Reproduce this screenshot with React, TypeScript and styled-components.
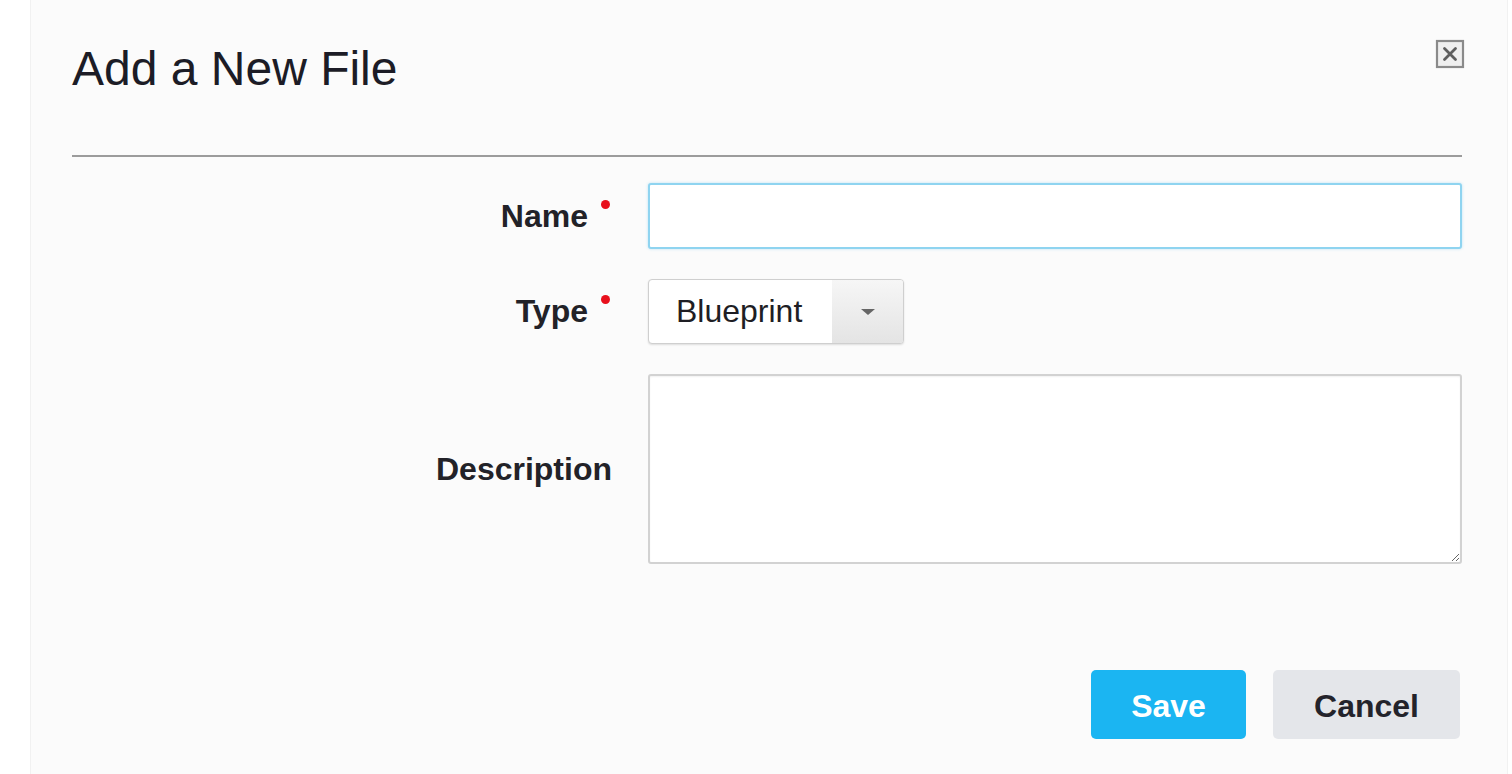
import React from 'react';
import styled, { createGlobalStyle } from 'styled-components';

const GlobalStyle = createGlobalStyle`
  html, body {
    margin: 0;
    padding: 0;
    height: 100%;
    background: #ffffff;
    font-family: "Liberation Sans", Arial, Helvetica, sans-serif;
    overflow: hidden;
  }
  #root {
    height: 100%;
  }
`;

const Page = styled.div`
  height: 774px;
  display: flex;
  padding-left: 30px;
`;

const Dialog = styled.div`
  width: 1478px;
  height: 100%;
  box-sizing: border-box;
  background: #fbfbfb;
  border-left: 1px solid #f1f1f1;
  border-right: 1px solid #f1f1f1;
  padding: 0 45px 0 41px;
  display: flex;
  flex-direction: column;
`;

const Header = styled.div`
  display: flex;
  justify-content: space-between;
  align-items: flex-start;
  padding-top: 41px;
  padding-bottom: 58px;
  border-bottom: 2px solid #9c9c9c;
`;

const Title = styled.h1`
  margin: 0;
  font-size: 48px;
  line-height: 56px;
  font-weight: normal;
  color: #1c1c26;
`;

const CloseButton = styled.button`
  margin: -2px -3px 0 0;
  padding: 0;
  border: none;
  background: none;
  width: 30px;
  height: 30px;
  cursor: pointer;
`;

const Form = styled.div`
  display: grid;
  grid-template-columns: 540px 814px;
  column-gap: 36px;
  row-gap: 30px;
  padding-top: 26px;
`;

const Label = styled.label`
  align-self: center;
  text-align: right;
  font-size: 32px;
  font-weight: bold;
  color: #222228;
  white-space: nowrap;
`;

const Required = styled.span`
  display: inline-block;
  width: 9px;
  height: 9px;
  border-radius: 50%;
  background: #e8101c;
  vertical-align: top;
  margin: 2px 2px 0 13px;
`;

const TextInput = styled.input`
  height: 66px;
  box-sizing: border-box;
  border: 2px solid #8fd4f0;
  border-radius: 3px;
  background: #ffffff;
  box-shadow: 0 0 3px rgba(110, 200, 240, 0.45);
  outline: none;
  font-size: 32px;
  padding: 0 16px;
  font-family: inherit;
`;

const Select = styled.div`
  width: 256px;
  height: 65px;
  box-sizing: border-box;
  display: flex;
  border: 1px solid #cfcfcf;
  border-radius: 4px;
  background: #ffffff;
  box-shadow: 0 1px 2px rgba(0, 0, 0, 0.12);
  overflow: hidden;
`;

const SelectValue = styled.div`
  flex: 1;
  display: flex;
  align-items: center;
  padding-left: 27px;
  font-size: 32px;
  color: #1e1e24;
`;

const SelectArrow = styled.div`
  width: 71px;
  display: flex;
  align-items: center;
  justify-content: center;
  background: linear-gradient(#f6f6f6, #e4e4e4);
`;

const Caret = styled.div`
  width: 0;
  height: 0;
  border-left: 7px solid transparent;
  border-right: 7px solid transparent;
  border-top: 6px solid #666;
`;

const TextArea = styled.textarea`
  height: 190px;
  box-sizing: border-box;
  border: 2px solid #d2d2d2;
  border-radius: 3px;
  background: #ffffff;
  box-shadow: inset 0 1px 2px rgba(0, 0, 0, 0.06);
  outline: none;
  font-size: 32px;
  font-family: inherit;
  padding: 12px 16px;
`;

const Footer = styled.div`
  display: flex;
  justify-content: flex-end;
  gap: 27px;
  margin-top: 106px;
  padding-right: 2px;
`;

const Button = styled.button<{ $primary?: boolean }>`
  height: 69px;
  width: ${p => (p.$primary ? '155px' : '187px')};
  padding: 4px 0 0;
  border: none;
  border-radius: 5px;
  font-family: inherit;
  font-size: 32px;
  font-weight: bold;
  background: ${p => (p.$primary ? '#1bb5f2' : '#e4e6ea')};
  color: ${p => (p.$primary ? '#ffffff' : '#23232b')};
  cursor: pointer;
`;

const CloseIcon = () => (
  <svg width="30" height="30" viewBox="0 0 30 30">
    <rect x="2" y="2" width="26" height="26" fill="#efefef" stroke="#8a8a8a" strokeWidth="2.2" />
    <path d="M9.5 9.5 L20.5 20.5 M20.5 9.5 L9.5 20.5" stroke="#5e5e5e" strokeWidth="2.8" strokeLinecap="round" />
  </svg>
);

export default function App() {
  return (
    <>
      <GlobalStyle />
      <Page>
        <Dialog>
          <Header>
            <Title>Add a New File</Title>
            <CloseButton aria-label="Close">
              <CloseIcon />
            </CloseButton>
          </Header>
          <Form>
            <Label>
              Name<Required aria-label="required" />
            </Label>
            <TextInput type="text" />
            <Label>
              Type<Required aria-label="required" />
            </Label>
            <Select>
              <SelectValue>Blueprint</SelectValue>
              <SelectArrow>
                <Caret />
              </SelectArrow>
            </Select>
            <Label>Description</Label>
            <TextArea />
          </Form>
          <Footer>
            <Button $primary>Save</Button>
            <Button>Cancel</Button>
          </Footer>
        </Dialog>
      </Page>
    </>
  );
}
